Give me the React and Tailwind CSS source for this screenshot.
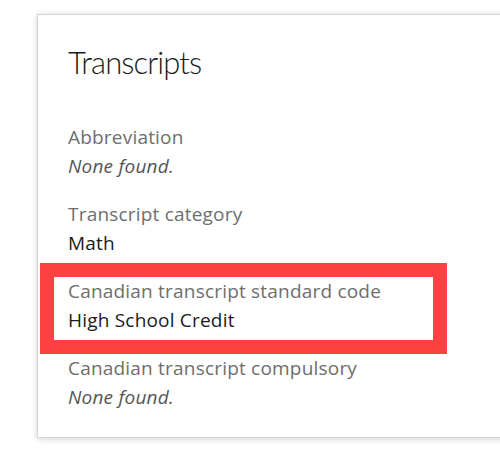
import React from 'react';

const fields = [
  { label: 'Abbreviation', value: 'None found.', empty: true },
  { label: 'Transcript category', value: 'Math' },
  { label: 'Canadian transcript standard code', value: 'High School Credit' },
  { label: 'Canadian transcript compulsory', value: 'None found.', empty: true },
];

export default function App() {
  return (
    <div className="relative w-[500px] h-[458px] overflow-hidden bg-white" style={{ fontFamily: '"Open Sans", sans-serif' }}>
      <div className="mt-[14px] ml-[37px] w-[520px] h-[424px] bg-white border border-[#d6d6d6] shadow-[0_1px_6px_rgba(0,0,0,0.18)] pl-[30px] pt-[27px]">
        <h2 className="text-[31px] leading-[40px] font-light text-[#1b1b1b] tracking-[-0.9px]" style={{ fontFamily: 'Lato, sans-serif' }}>Transcripts</h2>
        <div className="mt-[41px] flex flex-col gap-[19px]">
          {fields.map(f => (
            <div key={f.label} className="flex flex-col">
              <span className="text-[19px] leading-[29px] tracking-[0.2px] text-[#6e6e6e]">{f.label}</span>
              <span className={f.empty ? 'text-[19px] leading-[29px] tracking-[0.2px] italic text-[#555]' : 'text-[19px] leading-[29px] tracking-[0.2px] text-[#1b1b1b]'}>
                {f.value}
              </span>
            </div>
          ))}
        </div>
      </div>
      {/* annotation box */}
      <div className="absolute left-[40px] top-[263px] w-[407px] h-[91px] border-[14px] border-[#fd4142]" />
    </div>
  );
}
